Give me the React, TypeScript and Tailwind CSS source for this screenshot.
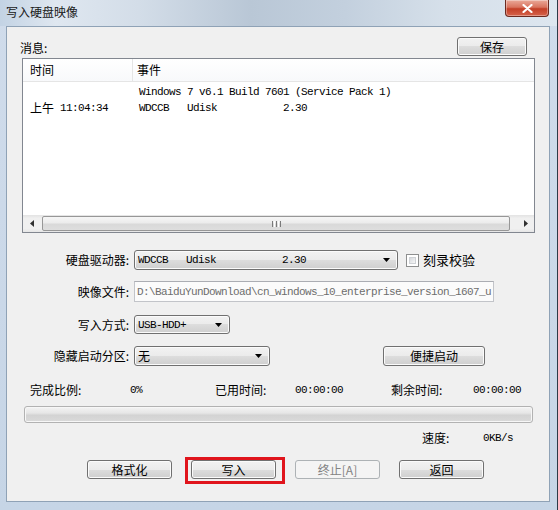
import React from "react";

const btnBase =
  "flex items-center justify-center rounded-[3px] border border-[#707070] bg-[linear-gradient(180deg,#f2f2f2_0%,#ebebeb_50%,#dddddd_50%,#cfcfcf_100%)] shadow-[inset_0_0_0_1px_#fbfbfb] text-[12px] leading-[14px] text-black";

function Btn({ cls, children }: { cls: string; children: React.ReactNode }) {
  return <div className={`${btnBase} ${cls}`}>{children}</div>;
}

function Arrow() {
  return (
    <svg width="7" height="4" viewBox="0 0 7 4">
      <path d="M0 0 L7 0 L3.5 4 Z" fill="#000" />
    </svg>
  );
}

function Select({ cls, children }: { cls: string; children: React.ReactNode }) {
  return (
    <div
      className={`flex items-center rounded-[3px] border border-[#707070] bg-[linear-gradient(180deg,#f2f2f2_0%,#ebebeb_50%,#dddddd_50%,#cfcfcf_100%)] shadow-[inset_0_0_0_1px_#fbfbfb] ${cls}`}
    >
      <div className="flex-1 pl-[3px] whitespace-pre">{children}</div>
      <div className="pr-[7px] flex items-center">
        <Arrow />
      </div>
    </div>
  );
}

const mono =
  "font-['Liberation_Mono','Noto_Sans_CJK_SC',monospace] text-[11px] tracking-[-0.6px] leading-[14px]";

function Label({ children }: { children: React.ReactNode }) {
  return <div className="w-[127px] shrink-0 pr-[5px] text-right leading-[14px]">{children}</div>;
}

export default function App() {
  return (
    <div className="relative w-[558px] h-[510px] overflow-hidden flex flex-col border-r border-[#2d3a47] bg-[linear-gradient(180deg,#d0dceb_0%,#c6d5e6_100%)] font-['Noto_Sans_CJK_SC',sans-serif] text-[12px] text-black leading-none">
      {/* title bar */}
      <div className="h-[26px] shrink-0 flex items-start bg-[linear-gradient(90deg,#c3d3e4_0%,#dfe7f0_10%,#d3dde8_25%,#b9c7d6_45%,#c3d0de_62%,#d6e0ea_80%,#dde6ef_100%)]">
        <span className="ml-[6px] mt-[5px] text-[12px] leading-[14px] text-[#1a1a1a]">写入硬盘映像</span>
        <div className="ml-auto mr-[8px] w-[44px] h-[17px] rounded-b-[4px] border border-t-0 border-[#6b2a20] bg-[linear-gradient(180deg,#eaa999_0%,#d9745f_45%,#c33f27_55%,#d5634b_100%)] shadow-[inset_0_0_0_1px_rgba(255,255,255,0.35)] flex items-center justify-center">
          <svg width="11" height="9" viewBox="0 0 11 9">
            <path d="M1.5 1 L9.5 8 M9.5 1 L1.5 8" stroke="#fff" strokeWidth="2.2" strokeLinecap="round" />
          </svg>
        </div>
      </div>

      <div className="flex flex-1 min-h-0">
        <div className="w-[6px] shrink-0" />
        {/* client area */}
        <div className="w-[544px] shrink-0 border border-[#8fa2b6] bg-[#f0f0f0] flex flex-col">
          {/* messages label + save */}
          <div className="mt-[10px] h-[19px] flex items-center">
            <span className="ml-[13px] mt-[3px] leading-[14px]">消息:</span>
            <Btn cls="ml-auto mr-[22px] w-[70px] h-[19px]">保存</Btn>
          </div>

          {/* list view */}
          <div className="mt-[2px] ml-[15px] w-[513px] h-[175px] border border-[#828790] bg-white flex flex-col">
            <div className="h-[23px] shrink-0 flex border-b border-[#e5e5e5] bg-[linear-gradient(180deg,#ffffff_0%,#f8f9fb_100%)]">
              <div className="w-[110px] border-r border-[#e5e5e5] pl-[7px] flex items-center leading-[14px]">时间</div>
              <div className="pl-[4px] flex items-center leading-[14px]">事件</div>
            </div>
            <div className="flex-1 pt-[2px]">
              <div className="h-[16px] flex items-center">
                <div className="w-[111px] shrink-0" />
                <div className={`pl-[5px] whitespace-pre ${mono}`}>Windows 7 v6.1 Build 7601 (Service Pack 1)</div>
              </div>
              <div className="h-[16px] flex items-center">
                <div className="w-[111px] shrink-0 pl-[7px] flex items-center whitespace-pre">
                  <span className="leading-[14px]">上午</span>
                  <span className={mono}> 11:04:34</span>
                </div>
                <div className={`pl-[5px] whitespace-pre ${mono}`}>WDCCB   Udisk           2.30</div>
              </div>
            </div>
            {/* horizontal scrollbar */}
            <div className="h-[17px] shrink-0 flex bg-[linear-gradient(180deg,#e3e3e3_0%,#f0f0f0_20%,#f0f0f0_80%,#e6e6e6_100%)]">
              <div className="w-[17px] flex items-center justify-center">
                <svg width="4" height="7" viewBox="0 0 4 7">
                  <path d="M4 0 L4 7 L0 3.5 Z" fill="#303030" />
                </svg>
              </div>
              <div className="flex-1 py-[1px] pl-[2px] pr-[7px]">
                <div className="h-full rounded-[2px] border border-[#979797] bg-[linear-gradient(180deg,#f6f6f6_0%,#ececec_45%,#d9d9d9_55%,#dedede_100%)] flex items-center justify-center gap-[1px]">
                  <div className="w-[1px] h-[6px] bg-[#7a7a7a]" />
                  <div className="w-[1px] h-[6px] bg-[#ffffff]" />
                  <div className="w-[1px] h-[6px] bg-[#7a7a7a]" />
                  <div className="w-[1px] h-[6px] bg-[#ffffff]" />
                  <div className="w-[1px] h-[6px] bg-[#7a7a7a]" />
                </div>
              </div>
              <div className="w-[17px] flex items-center justify-center">
                <svg width="4" height="7" viewBox="0 0 4 7">
                  <path d="M0 0 L0 7 L4 3.5 Z" fill="#303030" />
                </svg>
              </div>
            </div>
          </div>

          {/* drive */}
          <div className="mt-[17px] h-[20px] flex items-center">
            <Label>硬盘驱动器:</Label>
            <Select cls={`w-[264px] h-[20px] ${mono}`}>WDCCB   Udisk           2.30</Select>
            <div className="ml-[8px] w-[13px] h-[13px] border border-[#8e8f8f] bg-white p-[2px]">
              <div className="w-full h-full border border-[#cfd2d6] bg-[linear-gradient(135deg,#d6d9dd_0%,#f7f7f7_100%)]" />
            </div>
            <span className="ml-[4px] leading-[14px] text-[13px]">刻录校验</span>
          </div>

          {/* image file */}
          <div className="mt-[11px] h-[21px] flex items-center">
            <Label>映像文件:</Label>
            <div className={`w-[360px] h-[21px] border border-[#c2c4c9] border-t-[#abadb3] bg-[#fbfbfb] text-[#6d6d6d] pl-[2px] flex items-center overflow-hidden whitespace-pre ${mono}`}>
              D:\BaiduYunDownload\cn_windows_10_enterprise_version_1607_u
            </div>
          </div>

          {/* write mode */}
          <div className="mt-[13px] h-[19px] flex items-center">
            <Label>写入方式:</Label>
            <Select cls={`w-[96px] h-[19px] ${mono}`}>USB-HDD+</Select>
          </div>

          {/* hidden partition */}
          <div className="mt-[12px] h-[20px] flex items-center">
            <Label>隐藏启动分区:</Label>
            <Select cls="w-[136px] h-[20px] text-[12px] leading-[16px]">无</Select>
            <Btn cls="ml-[113px] w-[102px] h-[20px]">便捷启动</Btn>
          </div>

          {/* status */}
          <div className="mt-[17px] h-[14px] pl-[23px] flex items-center">
            <div className="w-[100px] leading-[14px]">完成比例:</div>
            <div className={`w-[85px] ${mono}`}>0%</div>
            <div className="w-[80px] leading-[14px]">已用时间:</div>
            <div className={`w-[96px] ${mono}`}>00:00:00</div>
            <div className="w-[82px] leading-[14px]">剩余时间:</div>
            <div className={mono}>00:00:00</div>
          </div>

          {/* progress */}
          <div className="mt-[9px] ml-[17px] w-[509px] h-[17px] rounded-[3px] border border-[#b2b2b2] bg-[linear-gradient(180deg,#f4f4f4_0%,#e6e6e6_40%,#d3d3d3_55%,#dadada_100%)] shadow-[inset_0_0_0_1px_#f7f7f7]" />

          {/* speed */}
          <div className="mt-[8px] h-[14px] pl-[415px] flex items-center">
            <div className="w-[61px] leading-[14px]">速度:</div>
            <div className={mono}>0KB/s</div>
          </div>

          {/* buttons */}
          <div className="mt-[15px] h-[19px] pl-[80px] flex items-center gap-[19px]">
            <Btn cls="w-[85px] h-[19px]">格式化</Btn>
            <div className="relative">
              <Btn cls="w-[85px] h-[19px]">写入</Btn>
              <div className="absolute left-[-6px] right-[-9px] top-[-3px] bottom-[-5px] border-[3px] border-[#e0141c]" />
            </div>
            <div className="w-[85px] h-[19px] flex items-center justify-center rounded-[3px] border border-[#adb2b5] bg-[#f4f4f4] text-[#838383] leading-[14px]">
              终止[A]
            </div>
            <Btn cls="w-[85px] h-[19px]">返回</Btn>
          </div>
        </div>
        <div className="flex-1" />
      </div>
      <div className="h-[8px] shrink-0" />
    </div>
  );
}
